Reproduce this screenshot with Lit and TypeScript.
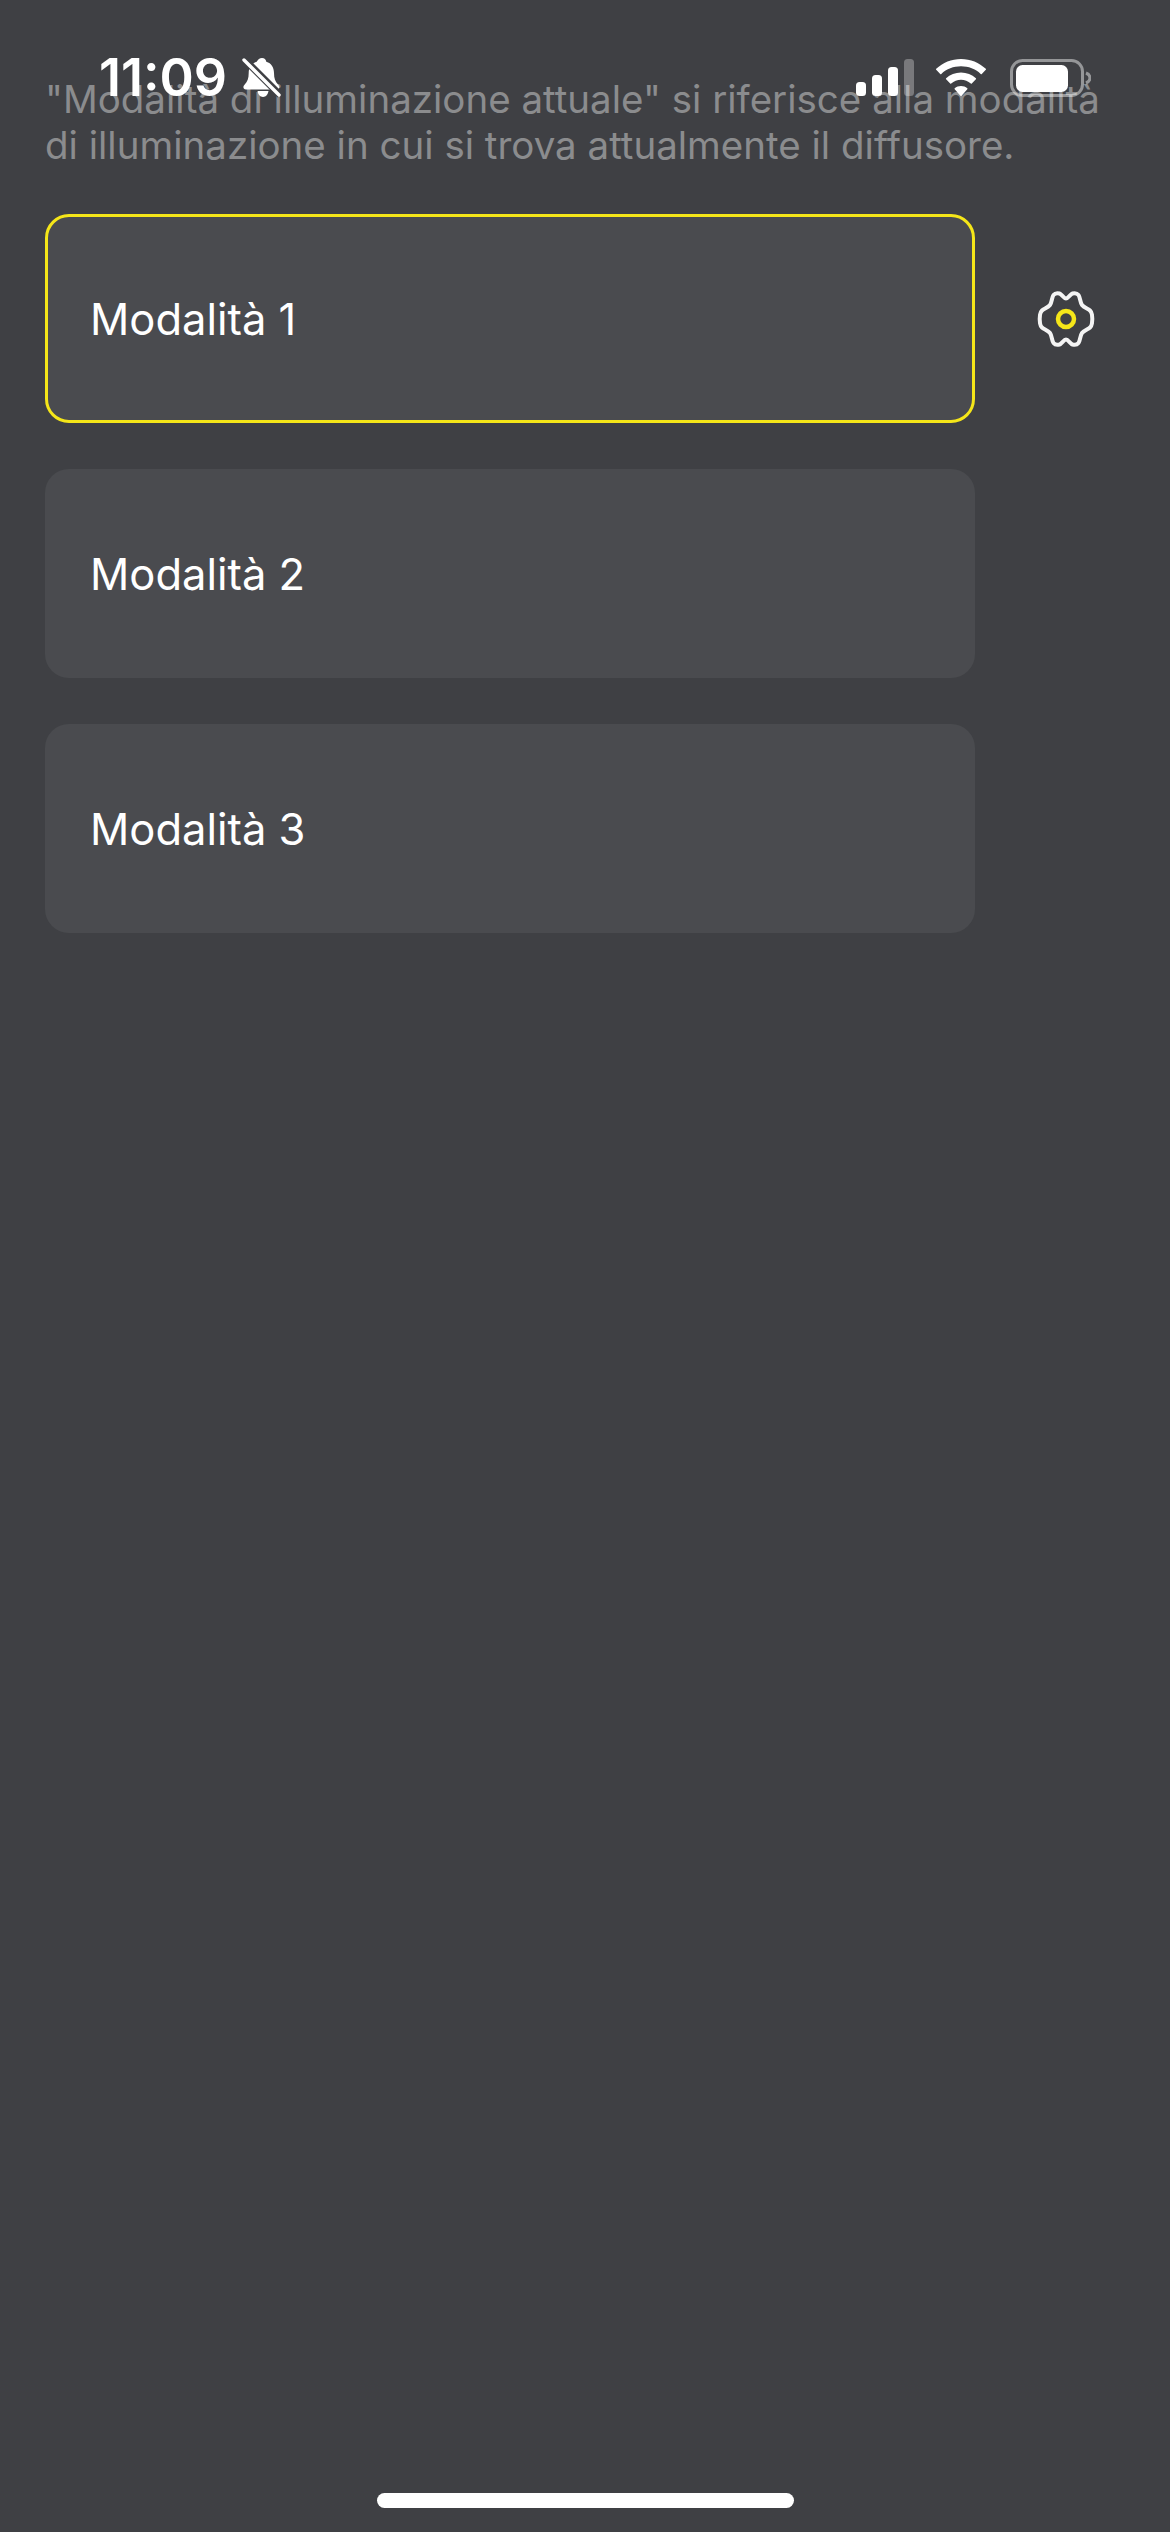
import {css, html, LitElement, svg} from 'lit'
import {customElement, property} from 'lit/decorators.js'

// right-to-top quarter of the gear outline, offsets from its centre
const GEAR_QUARTER = [[26, -4], [24, -8.5], [16, -14], [12.5, -24], [6.5, -25.5], [0, -20.5]]

function gearPath(cx: number, cy: number) {
    const q = GEAR_QUARTER
    const top = [...q, ...q.slice(0, -1).reverse().map(([x, y]) => [-x, y])]
    const pts = [...top, ...top.map(([x, y]) => [-x, -y])].map(([x, y]) => [x + cx, y + cy])
    const n = pts.length
    let d = `M${pts[0][0]} ${pts[0][1]}`
    // closed catmull-rom turned into cubic segments
    for (let i = 0; i < n; i++) {
        const p0 = pts[(i + n - 1) % n], p1 = pts[i], p2 = pts[(i + 1) % n], p3 = pts[(i + 2) % n]
        const c1 = [p1[0] + (p2[0] - p0[0]) / 6, p1[1] + (p2[1] - p0[1]) / 6]
        const c2 = [p2[0] - (p3[0] - p1[0]) / 6, p2[1] - (p3[1] - p1[1]) / 6]
        d += `C${c1[0].toFixed(2)} ${c1[1].toFixed(2)} ${c2[0].toFixed(2)} ${c2[1].toFixed(2)} ${p2[0]} ${p2[1]}`
    }
    return d + 'Z'
}

@customElement('status-bar')
export class StatusBar extends LitElement {
    render() {
        return html`
            <div class="left">
                <span class="time">11:09</span>
                <svg class="bell" width="40" height="42" viewBox="0 0 40 42">
                    <path fill="#fff" d="M21 0c2.400 0 4 1.700 4.300 3.800 5.200 1.500 7.700 5.800 7.700 11.200 0 5.500 1.300 8.800 4 11.500 1.800 1.800 2 5-1.300 5H5c-3.300 0-3.100-3.200-1.300-5 2.700-2.700 4-6 4-11.500 0-5.400 3-9.700 8-11.200C17 1.700 18.600 0 21 0z"/>
                    <path fill="#fff" d="M16.500 33h11c-.4 3-2.600 6-5.500 6s-5.100-3-5.500-6z"/>
                    <path stroke="#3f4044" stroke-width="7" d="M1 -1l38 38"/>
                    <path stroke="#fff" stroke-width="3.400" stroke-linecap="round" d="M3 2l35 35"/>
                </svg>
            </div>
            <div class="right">
                <svg width="58" height="38" viewBox="0 0 58 38">
                    <rect x="0" y="23" width="10" height="14" rx="3.500" fill="#fff"/>
                    <rect x="16" y="16" width="10" height="21" rx="3.500" fill="#fff"/>
                    <rect x="32" y="8" width="10" height="29" rx="3.500" fill="#fff"/>
                    <rect x="48" y="0" width="10" height="37" rx="3.500" fill="#fff" fill-opacity=".3"/>
                </svg>
                <svg class="wifi" width="50" height="38" viewBox="0 0 50 38">
                    <path fill="#fff" d="M25 0c9.500 0 18.200 3.700 24.800 9.800.3.300.3.700 0 1l-4 4.100c-.3.300-.8.300-1.100 0C39.400 10 32.500 7.300 25 7.300S10.600 10 5.300 14.900c-.3.300-.8.300-1.100 0l-4-4.100c-.3-.3-.3-.7 0-1C6.800 3.700 15.500 0 25 0z"/>
                    <path fill="#fff" d="M25 13.500c5.700 0 10.900 2.200 14.900 5.800.3.300.3.700 0 1l-4.100 4.100c-.3.300-.7.300-1 0-2.700-2.300-6.100-3.700-9.800-3.700s-7.100 1.400-9.800 3.700c-.3.300-.7.300-1 0l-4.100-4.100c-.3-.3-.3-.7 0-1 4-3.600 9.200-5.800 14.900-5.800z"/>
                    <path fill="#fff" d="M25 27c2.400 0 4.600.9 6.300 2.300.3.300.3.700 0 1l-5.700 6.400c-.3.400-.9.400-1.200 0l-5.700-6.400c-.3-.3-.3-.7 0-1 1.700-1.400 3.900-2.300 6.300-2.300z"/>
                </svg>
                <svg class="battery" width="81" height="38" viewBox="0 0 81 38">
                    <rect x="1.500" y="1.500" width="71" height="35" rx="11" fill="none" stroke="#fff" stroke-opacity=".45" stroke-width="3"/>
                    <rect x="6" y="6" width="52" height="27" rx="6.500" fill="#fff"/>
                    <path d="M76 14c2.600 1 4 3 4 5s-1.400 4-4 5" fill="none" stroke="#fff" stroke-opacity=".45" stroke-width="3"/>
                </svg>
            </div>
        `
    }

    static styles = css`
      :host {
        position: absolute;
        top: 58px;
        left: 0;
        right: 0;
        display: flex;
        justify-content: space-between;
        align-items: flex-start;
        padding: 0 80px 0 99px;
      }

      .left {
        display: flex;
        align-items: flex-start;
        gap: 14px;
      }

      .time {
        color: #fff;
        font-family: Inter, sans-serif;
        font-size: 52px;
        font-weight: 600;
        line-height: 40px;
      }

      .right {
        display: flex;
        align-items: flex-start;
        margin-top: 1px;
      }

      svg {
        display: block;
      }

      .wifi {
        margin-left: 22px;
      }

      .battery {
        margin-left: 24px;
        margin-right: -1px;
      }
    `
}

@customElement('mode-row')
export class ModeRow extends LitElement {
    @property()
    label = ''

    @property({type: Boolean})
    selected = false

    render() {
        return html`
            <div class="row">
                <button class="card ${this.selected ? 'selected' : ''}">${this.label}</button>
                ${this.selected ? html`
                    <svg class="gear" width="64" height="64" viewBox="0 0 64 64">
                        ${svg`<path d=${gearPath(32, 32)} fill="none" stroke="#f4f4f4" stroke-width="4" stroke-linejoin="round"/>`}
                        <circle cx="32" cy="32" r="8" fill="none" stroke="#f5e619" stroke-width="4.500"/>
                    </svg>` : null}
            </div>
        `
    }

    static styles = css`
      :host {
        display: block;
      }

      .row {
        display: flex;
        align-items: center;
        gap: 59px;
      }

      .card {
        box-sizing: border-box;
        display: block;
        flex: none;
        width: 930px;
        height: 209px;
        padding: 0 42px;
        background: #4a4b4f;
        border: 3px solid transparent;
        border-radius: 24px;
        color: #fff;
        font-family: Inter, sans-serif;
        font-size: 43.500px;
        text-align: left;
      }

      .selected {
        border-color: #f5e619;
      }

      .gear {
        flex: none;
      }
    `
}

@customElement('app-root')
export class AppRoot extends LitElement {
    modes = ['Modalità 1', 'Modalità 2', 'Modalità 3']

    render() {
        return html`
            <status-bar></status-bar>
            <p class="description">"Modalità di illuminazione attuale" si riferisce alla modalità di illuminazione in cui si trova attualmente il diffusore.</p>
            <div class="modes">
                ${this.modes.map((m, i) => html`<mode-row .label=${m} ?selected=${i === 0}></mode-row>`)}
            </div>
            <div class="home-bar"></div>
        `
    }

    static styles = css`
      :host {
        position: relative;
        display: block;
        box-sizing: border-box;
        height: 2532px;
        padding: 76px 45px 0;
        overflow: hidden;
        background: #3f4044;
      }

      .description {
        margin: 0 0 46px;
        width: 1080px;
        color: #8b8c8e;
        font-family: Inter, sans-serif;
        font-size: 38.500px;
        line-height: 46px;
      }

      .modes {
        display: flex;
        flex-direction: column;
        gap: 46px;
      }

      .home-bar {
        position: absolute;
        left: 377px;
        bottom: 24px;
        width: 417px;
        height: 15px;
        border-radius: 8px;
        background: #fff;
      }
    `
}
